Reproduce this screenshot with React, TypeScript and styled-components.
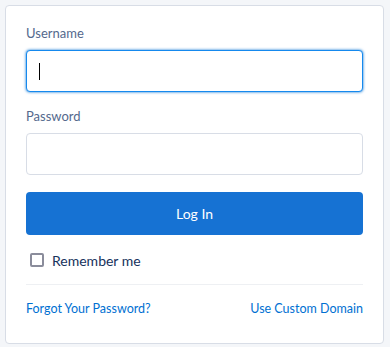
import React from "react";
import styled, { createGlobalStyle } from "styled-components";

const Global = createGlobalStyle`
  html, body { margin: 0; padding: 0; background: #f4f6f9; }
  body { font-family: Lato, "Noto Sans", sans-serif; -webkit-font-smoothing: antialiased; }
  * { box-sizing: border-box; }
`;

const Page = styled.div`
  padding: 5px 6px 6px 5px;
`;

const Card = styled.form`
  width: 379px;
  background: #ffffff;
  border: 1px solid #d8dde6;
  border-radius: 4px;
  padding: 18px 20px 25px 20px;
  display: flex;
  flex-direction: column;
`;

const Label = styled.label<{ $gapTop?: number }>`
  display: block;
  font-size: 13px;
  line-height: 18px;
  color: #54698d;
  margin-top: ${(p) => p.$gapTop ?? 0}px;
  margin-bottom: 8px;
`;

const FieldWrap = styled.div`
  position: relative;
`;

const Input = styled.input<{ $focused?: boolean }>`
  display: block;
  width: 100%;
  height: 42px;
  padding: 0 12px;
  font-family: inherit;
  font-size: 14px;
  color: #16325c;
  background: #fff;
  border: 1px solid ${(p) => (p.$focused ? "#1589ee" : "#d8dde6")};
  border-radius: 4px;
  box-shadow: ${(p) => (p.$focused ? "0 0 3px #0070d2" : "none")};
  outline: none;
  caret-color: transparent;
`;

const Caret = styled.span`
  position: absolute;
  left: 13px;
  top: 13px;
  width: 1px;
  height: 17px;
  background: #000;
`;

const Button = styled.button`
  margin-top: 17px;
  height: 43px;
  width: 100%;
  border: none;
  border-radius: 4px;
  background: #1672d3;
  color: #fff;
  font-family: inherit;
  font-size: 14px;
  cursor: pointer;
`;

const RememberRow = styled.label`
  margin-top: 15px;
  height: 20px;
  display: flex;
  align-items: center;
  gap: 8px;
  padding-left: 4px;
  font-size: 14px;
  color: #16325c;
`;

const Box = styled.span`
  width: 14px;
  height: 14px;
  border: 2px solid #8a8c9b;
  border-radius: 2px;
  background: #fff;
  flex: none;
`;

const Divider = styled.hr`
  margin: 14px 0 0 0;
  border: none;
  height: 1px;
  background: #eef0f3;
`;

const Links = styled.div`
  margin-top: 15px;
  display: flex;
  justify-content: space-between;
  font-size: 12.5px;
  line-height: 18px;
`;

const Link = styled.a`
  color: #0070d2;
  text-decoration: none;
`;

export default function App() {
  return (
    <>
      <Global />
      <Page>
        <Card onSubmit={(e) => e.preventDefault()}>
          <Label>Username</Label>
          <FieldWrap>
            <Input $focused readOnly />
            <Caret />
          </FieldWrap>
          <Label $gapTop={15}>Password</Label>
          <Input type="password" readOnly />
          <Button type="submit">Log In</Button>
          <RememberRow>
            <Box />
            Remember me
          </RememberRow>
          <Divider />
          <Links>
            <Link href="#">Forgot Your Password?</Link>
            <Link href="#">Use Custom Domain</Link>
          </Links>
        </Card>
      </Page>
    </>
  );
}
